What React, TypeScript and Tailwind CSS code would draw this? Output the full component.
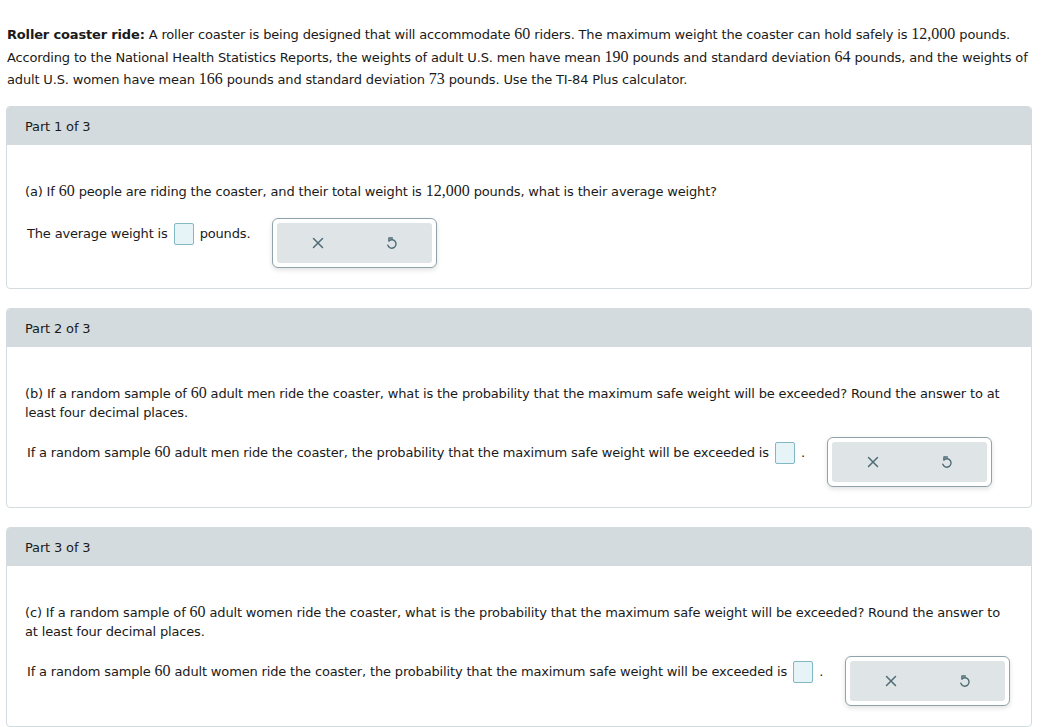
import React from 'react';

const M = ({ children }: { children: React.ReactNode }) => (
  <span className="font-['Liberation_Serif',serif] text-[16px] tracking-normal">{children}</span>
);

function UndoIcon() {
  return (
    <svg width="13" height="14" viewBox="0 0 12 13" fill="none" stroke="#4f6b75" strokeWidth="1.3" strokeLinecap="round" strokeLinejoin="round">
      <path d="M6.8 1.8 H3.6 V4.6" />
      <path d="M3.8 4.4 A3.9 3.9 0 1 1 2.6 8.6" />
    </svg>
  );
}

function XIcon() {
  return (
    <svg width="12" height="12" viewBox="0 0 12 12" stroke="#4f6b75" strokeWidth="1.5" strokeLinecap="round">
      <path d="M1.5 1.5 L10.5 10.5 M10.5 1.5 L1.5 10.5" />
    </svg>
  );
}

function ActionBox() {
  return (
    <div className="ml-[22px] w-[165px] h-[50px] shrink-0 rounded-[6px] border border-[#8fa3aa] bg-white p-[4px] shadow-[0_2px_5px_rgba(0,0,0,0.12)]">
      <div className="flex h-full items-center rounded-[3px] bg-[#dfe5e7]">
        <span className="flex w-1/2 justify-center pl-[4px]">
          <XIcon />
        </span>
        <span className="flex w-1/2 justify-center pr-[4px]">
          <UndoIcon />
        </span>
      </div>
    </div>
  );
}

function AnswerBox() {
  return (
    <span className="mx-[6px] inline-block h-[22px] w-[20px] rounded-[2px] border border-[#82b7c4] bg-[#e6f4f8] align-middle" />
  );
}

function Part({
  n,
  question,
  answer,
  gap,
}: {
  n: number;
  question: React.ReactNode;
  answer: React.ReactNode;
  gap: string;
}) {
  return (
    <div className="overflow-hidden rounded-[4px] border border-[#d3dbde]">
      <div className="flex h-[38px] items-center bg-[#d3dbde] px-[18px] pt-[2px]">Part {n} of 3</div>
      <div className="px-[18px] pt-[36px] pb-[20px]">
        <p className="leading-[19px]">{question}</p>
        <div className={`flex items-start ${gap}`}>
          <div className="whitespace-nowrap pt-[5px] pl-[2px] leading-[19px]">{answer}</div>
          <ActionBox />
        </div>
      </div>
    </div>
  );
}

export default function App() {
  return (
    <div className="min-h-screen bg-white px-[6px] pt-[23px] text-[13px] tracking-[-0.16px] text-[#1a1a1a] font-['DejaVu_Sans',Verdana,sans-serif]">
      <p className="pl-[1px] leading-[21.5px]">
        <b>Roller coaster ride:</b> A roller coaster is being designed that will accommodate <M>60</M> riders. The maximum weight the coaster can hold safely is <M>12,000</M> pounds. According to the National Health Statistics Reports, the weights of adult U.S. men have mean <M>190</M> pounds and standard deviation <M>64</M> pounds, and the weights of adult U.S. women have mean <M>166</M> pounds and standard deviation <M>73</M> pounds. Use the TI-84 Plus calculator.
      </p>
      <div className="mt-[15px] flex w-[1026px] flex-col gap-[19px]">
        <Part
          n={1}
          gap="mt-[17px]"
          question={
            <>
              (a) If <M>60</M> people are riding the coaster, and their total weight is <M>12,000</M> pounds, what is their average weight?
            </>
          }
          answer={
            <>
              The average weight is
              <AnswerBox />
              pounds.
            </>
          }
        />
        <Part
          n={2}
          gap="mt-[15px]"
          question={
            <>
              (b) If a random sample of <M>60</M> adult men ride the coaster, what is the probability that the maximum safe weight will be exceeded? Round the answer to at least four decimal places.
            </>
          }
          answer={
            <>
              If a random sample <M>60</M> adult men ride the coaster, the probability that the maximum safe weight will be exceeded is
              <AnswerBox />.
            </>
          }
        />
        <Part
          n={3}
          gap="mt-[15px]"
          question={
            <>
              (c) If a random sample of <M>60</M> adult women ride the coaster, what is the probability that the maximum safe weight will be exceeded? Round the answer to at least four decimal places.
            </>
          }
          answer={
            <>
              If a random sample <M>60</M> adult women ride the coaster, the probability that the maximum safe weight will be exceeded is
              <AnswerBox />.
            </>
          }
        />
      </div>
    </div>
  );
}
